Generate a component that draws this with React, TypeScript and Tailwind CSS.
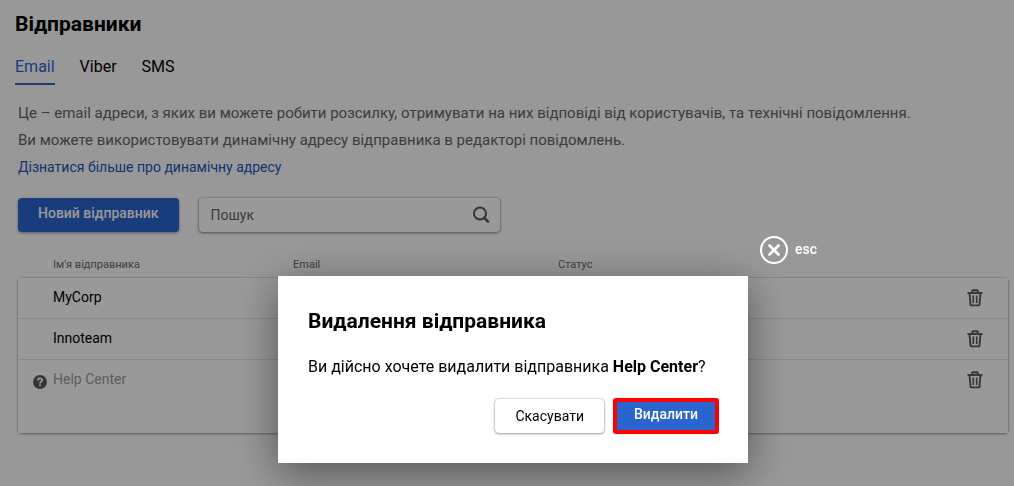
const tabs = ["Email", "Viber", "SMS"];

const senders = [
  { name: "MyCorp", pending: false },
  { name: "Innoteam", pending: false },
  { name: "Help Center", pending: true },
];

function SearchIcon() {
  return (
    <svg viewBox="0 0 18 18" className="h-[18px] w-[18px]" fill="none" stroke="#5a5a5a" strokeWidth="2">
      <circle cx="8" cy="7.5" r="6" />
      <path d="M12.400 12l3.600 3.600" strokeWidth="2.6" strokeLinecap="round" />
    </svg>
  );
}

function TrashIcon() {
  return (
    <svg viewBox="0 0 16 18" className="h-[18px] w-4" fill="none" stroke="#5a5a5a" strokeWidth="1.6">
      <path d="M5.200 3V2q0-.7.700-.7h4.200q.7 0 .7.700v1" strokeWidth="2" />
      <path d="M.5 4h15" strokeWidth="1.900" />
      <path d="M2.600 5l.9 10.600q.1.800.9.800h7.200q.8 0 .9-.8L13.400 5" strokeWidth="1.900" />
      <path d="M6.300 6.500v7.500M9.700 6.500v7.500" />
    </svg>
  );
}

function HelpIcon() {
  return (
    <svg viewBox="0 0 14 14" className="h-3.5 w-3.5" fill="none">
      <circle cx="7" cy="7" r="7" fill="#5a5a5a" />
      <path
        d="M4.900 5.500q0-2.200 2.100-2.200t2.100 1.900q0 .9-1 1.600-1.100.7-1.100 1.700"
        stroke="#fff"
        strokeWidth="1.700"
      />
      <rect x="6.100" y="9.500" width="1.800" height="1.700" fill="#fff" />
    </svg>
  );
}

function CloseIcon() {
  return (
    <svg viewBox="0 0 28 28" className="h-7 w-7" fill="none" stroke="#fff">
      <circle cx="14" cy="14" r="13" strokeWidth="2" />
      <path d="M9.500 9.500l9 9M18.500 9.500l-9 9" strokeWidth="2.600" strokeLinecap="round" />
    </svg>
  );
}

function SendersTable() {
  return (
    <table className="w-full table-fixed border-separate border-spacing-0 text-left">
      <colgroup>
        <col className="w-[35px]" />
        <col className="w-[240px]" />
        <col className="w-[265px]" />
        <col />
        <col className="w-[66px]" />
      </colgroup>
      <thead className="text-[11px] leading-4 text-[#6b6b6b]">
        <tr>
          <td className="pb-[5px]" />
          <th className="pb-[5px] font-normal">Ім'я відправника</th>
          <th className="pb-[5px] font-normal">Email</th>
          <th className="pb-[5px] font-normal">Статус</th>
          <td className="pb-[5px]" />
        </tr>
      </thead>
      <tbody className="rounded bg-white text-sm shadow-[0_0_2px_rgba(0,0,0,0.35),0_1px_3px_rgba(0,0,0,0.3)] [&>tr:not(:last-child)>td]:border-b [&>tr:not(:last-child)>td]:border-[#e4e4e4]">
        {senders.map((sender) => (
          <tr key={sender.name} className="h-[41px] align-top last:h-[73px]">
            <td className="pt-[15px] pl-[15px]">{sender.pending && <HelpIcon />}</td>
            <td className={sender.pending ? "pt-[9px] text-[#9a9a9a]" : "pt-[9px]"}>{sender.name}</td>
            <td />
            <td />
            <td className="pt-[11px] pl-[25px]">
              <button type="button" aria-label="Видалити" className="block">
                <TrashIcon />
              </button>
            </td>
          </tr>
        ))}
      </tbody>
    </table>
  );
}

function DeleteDialog() {
  return (
    <div className="fixed inset-0 flex items-start justify-center bg-black/40 pt-[276px] pl-3">
      <div
        role="dialog"
        aria-labelledby="dialog-title"
        className="relative w-[470px] bg-white p-[30px] shadow-[0_10px_40px_rgba(0,0,0,0.45)]"
      >
        <button
          type="button"
          className="absolute bottom-full left-full mb-3 ml-3 flex items-center gap-[7px] text-sm font-medium text-white"
        >
          <CloseIcon />
          <span className="pb-0.5">esc</span>
        </button>
        <h2 id="dialog-title" className="text-[21px] leading-[30px] font-bold">
          Видалення відправника
        </h2>
        <p className="mt-[19px] leading-6">
          Ви дійсно хочете видалити відправника <b>Help Center</b>?
        </p>
        <div className="mt-5 flex justify-end gap-2.5">
          <button
            type="button"
            className="h-[34px] rounded px-5 text-sm shadow-[0_0_2px_rgba(0,0,0,0.35),0_1px_3px_rgba(0,0,0,0.3)]"
          >
            Скасувати
          </button>
          <button
            type="button"
            className="h-[34px] rounded-xs bg-[#2a65cf] px-5 pb-1 text-sm font-medium text-white outline-4 -outline-offset-3 outline-[#ff0000]"
          >
            Видалити
          </button>
        </div>
      </div>
    </div>
  );
}

export default function App() {
  return (
    <div className="min-h-screen bg-[#fdfdfd] font-['Roboto',sans-serif] text-black">
      <main className="pt-2 pr-1.5 pl-[15px]">
        <h1 className="text-[21px] leading-8 font-bold">Відправники</h1>
        <nav className="mt-[15px] flex gap-[25px] text-base">
          {tabs.map((tab) => (
            <a
              key={tab}
              href="#"
              className={
                tab === "Email"
                  ? "border-b-2 border-[#2a65cf] pb-1 text-[#2a65cf]"
                  : "pb-1.5"
              }
            >
              {tab}
            </a>
          ))}
        </nav>
        <div className="pl-[3px]">
          <p className="mt-[15px] text-[15px] leading-[27px] text-[#666]">
            Це – email адреси, з яких ви можете робити розсилку, отримувати на них відповіді від
            користувачів, та технічні повідомлення.
            <br />
            Ви можете використовувати динамічну адресу відправника в редакторі повідомлень.
          </p>
          <a href="#" className="text-sm leading-[27px] text-[#2456b4]">
            Дізнатися більше про динамічну адресу
          </a>
          <div className="mt-[17px] mb-[25px] flex gap-5">
            <button
              type="button"
              className="h-[34px] rounded bg-[#2a65cf] px-5 pb-1 text-sm font-medium text-white shadow-[0_1px_3px_rgba(0,0,0,0.4)]"
            >
              Новий відправник
            </button>
            <label className="flex h-[34px] w-[301px] items-center rounded bg-white pr-2.5 pl-3 shadow-[0_0_2px_rgba(0,0,0,0.35),0_1px_3px_rgba(0,0,0,0.4)]">
              <input
                type="text"
                aria-label="Пошук"
                placeholder="Пошук"
                className="min-w-0 flex-1 text-sm outline-none placeholder:text-[#666]"
              />
              <SearchIcon />
            </label>
          </div>
          <SendersTable />
        </div>
      </main>
      <DeleteDialog />
    </div>
  );
}
